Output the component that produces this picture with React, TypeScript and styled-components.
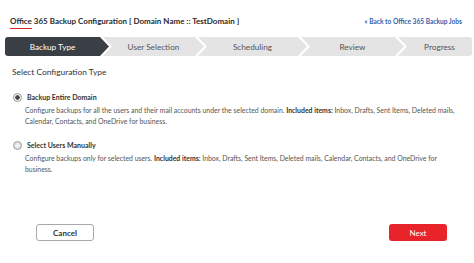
import styled, { createGlobalStyle } from "styled-components";

const GlobalStyle = createGlobalStyle`
  html, body {
    margin: 0;
    padding: 0;
    background: #ffffff;
  }
  body {
    font-family: Lato, "Open Sans", Arial, sans-serif;
    color: #333;
  }
`;

const steps = [
  { label: "Backup Type", width: 104 },
  { label: "User Selection", width: 101 },
  { label: "Scheduling", width: 109 },
  { label: "Review", width: 103 },
  { label: "Progress", width: 0 },
];

const App: React.FC = () => {
  return (
    <>
      <GlobalStyle />
      <Page>
        <Header>
          <Title>
            <Underlined>Office</Underlined> 365 Backup Configuration [ Domain Name :: TestDomain ]
          </Title>
          <BackLink href="#">« Back to Office 365 Backup Jobs</BackLink>
        </Header>

        <Stepper>
          {steps.map((s, i) => (
            <Step
              key={s.label}
              $width={s.width}
              $active={i === 0}
              $first={i === 0}
              $last={i === steps.length - 1}
            >
              {s.label}
            </Step>
          ))}
        </Stepper>

        <SectionTitle>Select Configuration Type</SectionTitle>

        <Option>
          <RadioRow>
            <Radio $checked />
            <OptionLabel>Backup Entire Domain</OptionLabel>
          </RadioRow>
          <Description>
            Configure backups for all the users and their mail accounts under the selected domain.{" "}
            <b>Included items:</b> Inbox, Drafts, Sent Items, Deleted mails, Calendar, Contacts, and
            OneDrive for business.
          </Description>
        </Option>

        <Option>
          <RadioRow>
            <Radio />
            <OptionLabel>Select Users Manually</OptionLabel>
          </RadioRow>
          <Description $right={22}>
            Configure backups only for selected users. <b>Included items:</b> Inbox, Drafts, Sent
            Items, Deleted mails, Calendar, Contacts, and OneDrive for business.
          </Description>
        </Option>

        <Footer>
          <CancelButton>Cancel</CancelButton>
          <NextButton>Next</NextButton>
        </Footer>
      </Page>
    </>
  );
};

export default App;

const Page = styled.div`
  width: 474px;
  height: 263px;
  box-sizing: border-box;
  padding: 14px 2px 0 5px;
  display: flex;
  flex-direction: column;
`;

const Header = styled.div`
  display: flex;
  align-items: center;
  justify-content: space-between;
  padding: 0 10px 0 5px;
  height: 14px;
`;

const Title = styled.div`
  font-size: 8px;
  font-weight: 700;
  color: #2b2b2b;
`;

const Underlined = styled.span`
  position: relative;

  &::after {
    content: "";
    position: absolute;
    left: 0;
    right: 0;
    bottom: -3px;
    height: 1.5px;
    background: #d8262d;
  }
`;

const BackLink = styled.a`
  font-size: 6.6px;
  font-weight: 700;
  color: #2f5fae;
  text-decoration: none;
`;

const Stepper = styled.div`
  display: flex;
  margin-top: 9px;
  height: 19px;
`;

const Step = styled.div<{ $width: number; $active?: boolean; $first?: boolean; $last?: boolean }>`
  flex: ${(p) => (p.$width ? `0 0 ${p.$width}px` : "1")};
  box-sizing: border-box;
  display: flex;
  align-items: center;
  justify-content: center;
  font-size: 8.2px;
  color: ${(p) => (p.$active ? "#ffffff" : "#555555")};
  background: ${(p) => (p.$active ? "#3a3e45" : "#e4e4e4")};
  margin-left: ${(p) => (p.$first ? "0" : "-6px")};
  border-radius: ${(p) => (p.$first ? "3px 0 0 3px" : p.$last ? "0 3px 3px 0" : "0")};
  padding-left: ${(p) => (p.$first ? "0" : "9px")};
  padding-right: ${(p) => (p.$last ? "0" : "9px")};
  clip-path: ${(p) =>
    p.$first
      ? "polygon(0 0, calc(100% - 9px) 0, 100% 50%, calc(100% - 9px) 100%, 0 100%)"
      : p.$last
      ? "polygon(0 0, 100% 0, 100% 100%, 0 100%, 9px 50%)"
      : "polygon(0 0, calc(100% - 9px) 0, 100% 50%, calc(100% - 9px) 100%, 0 100%, 9px 50%)"};
`;

const SectionTitle = styled.div`
  margin: 10px 0 0 7px;
  font-size: 8.4px;
  color: #333;
  height: 12px;
  line-height: 12px;
`;

const Option = styled.div`
  display: flex;
  flex-direction: column;
  margin: 14px 0 0 7px;

  & + & {
    margin-top: 14px;
  }
`;

const RadioRow = styled.div`
  display: flex;
  align-items: center;
  gap: 5px;
  height: 10px;
`;

const Radio = styled.span<{ $checked?: boolean }>`
  width: 7px;
  height: 7px;
  margin-left: 1px;
  border-radius: 50%;
  border: 1px solid #9a9a9a;
  background: ${(p) =>
    p.$checked
      ? "radial-gradient(circle, #444 0 2px, #f2f2f2 2.4px)"
      : "radial-gradient(circle, #f4f4f4, #d8d8d8)"};
`;

const OptionLabel = styled.span`
  font-size: 7px;
  font-weight: 700;
  color: #333;
`;

const Description = styled.div<{ $right?: number }>`
  margin: 3px ${(p) => p.$right ?? 6}px 0 13px;
  font-size: 6.9px;
  line-height: 10.5px;
  color: #555;

  & b {
    color: #333;
  }
`;

const Footer = styled.div`
  display: flex;
  justify-content: space-between;
  margin-top: auto;
  padding: 0 25px 22px 31px;
`;

const BaseButton = styled.button`
  width: 58px;
  height: 17px;
  border-radius: 3px;
  font-family: Lato, Arial, sans-serif;
  font-size: 8px;
  cursor: pointer;
`;

const CancelButton = styled(BaseButton)`
  background: #ffffff;
  border: 1px solid #a8a8a8;
  color: #333;
  font-weight: 700;
`;

const NextButton = styled(BaseButton)`
  background: #e8232a;
  border: none;
  color: #ffffff;
`;
